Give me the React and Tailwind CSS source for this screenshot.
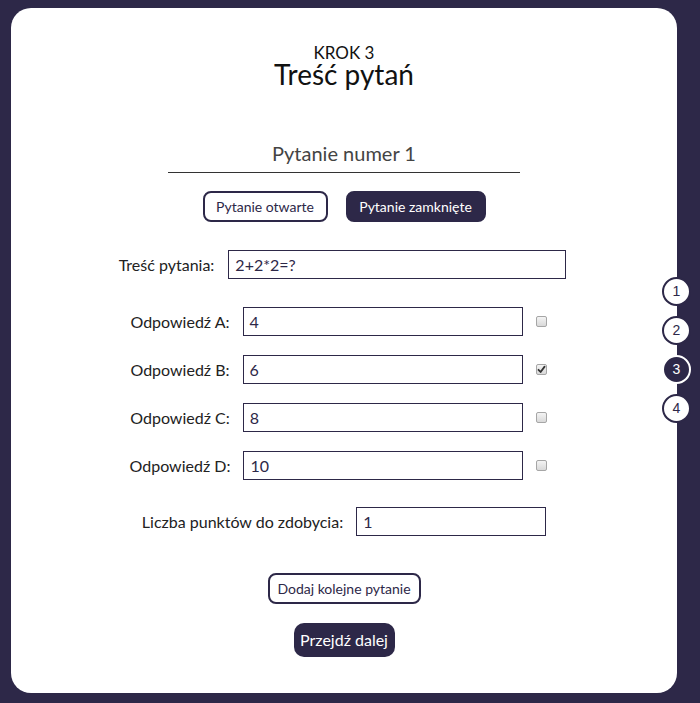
import React from "react";

function Check({ checked }) {
  return (
    <span className="relative flex w-[11px] h-[11px] shrink-0 items-center justify-center rounded-[2px] border border-[#a6a6a6] bg-gradient-to-b from-[#f4f4f4] to-[#d9d9d9]">
      {checked && (
        <svg width="9" height="9" viewBox="0 0 9 9" className="absolute">
          <path d="M1.5 4.8 L3.6 7 L7.6 1.6" fill="none" stroke="#333" strokeWidth="1.8" strokeLinecap="round" strokeLinejoin="round" />
        </svg>
      )}
    </span>
  );
}

function AnswerRow({ letter, value, checked }) {
  return (
    <div className="flex items-center pr-[11px]">
      <span className="text-[16px] leading-[20px] text-[#222]">Odpowiedź {letter}:</span>
      <div className="ml-[13px] flex h-[29px] w-[280px] items-center border border-[#2d2848] pl-[6px] text-[16px] text-[#2d2848]">
        {value}
      </div>
      <div className="ml-[13px]">
        <Check checked={checked} />
      </div>
    </div>
  );
}

export default function App() {
  return (
    <div className="min-h-[703px] w-full bg-[#2d2848] pt-[8px] pl-[11px] font-['Lato','Noto_Sans',sans-serif]">
      <div className="relative flex h-[685px] w-[666px] flex-col items-center rounded-[20px] bg-white pt-[36px]">
        <div className="text-[17px] leading-[17px] text-[#111]">KROK 3</div>
        <div className="text-[28px] leading-[26px] text-[#111]">Treść pytań</div>

        <div className="mt-[54px] w-[352px] border-b border-[#333] pb-[7px] text-center text-[20px] leading-[24px] text-[#444]">
          Pytanie numer 1
        </div>

        <div className="mt-[18px] flex gap-[18px]">
          <button className="flex h-[31px] w-[125px] items-center justify-center rounded-[8px] border-2 border-[#2d2848] bg-white text-[14px] text-[#2d2848]">
            Pytanie otwarte
          </button>
          <button className="flex h-[31px] w-[140px] items-center justify-center rounded-[8px] border-2 border-[#2d2848] bg-[#2d2848] text-[14px] text-white">
            Pytanie zamknięte
          </button>
        </div>

        <div className="mt-[28px] flex items-center pr-[3px]">
          <span className="text-[16px] leading-[20px] text-[#222]">Treść pytania:</span>
          <div className="ml-[14px] flex h-[29px] w-[338px] items-center border border-[#2d2848] pl-[6px] text-[16px] text-[#2d2848]">
            2+2*2=?
          </div>
        </div>

        <div className="mt-[28px] flex flex-col items-center gap-[19px]">
          <AnswerRow letter="A" value="4" />
          <AnswerRow letter="B" value="6" checked />
          <AnswerRow letter="C" value="8" />
          <AnswerRow letter="D" value="10" />
        </div>

        <div className="mt-[27px] flex items-center">
          <span className="text-[16px] leading-[20px] text-[#222]">Liczba punktów do zdobycia:</span>
          <div className="ml-[13px] flex h-[29px] w-[190px] items-center border border-[#2d2848] pl-[6px] text-[16px] text-[#2d2848]">
            1
          </div>
        </div>

        <button className="mt-[37px] flex h-[31px] w-[153px] items-center justify-center rounded-[8px] border-2 border-[#2d2848] bg-white text-[14px] text-[#2d2848]">
          Dodaj kolejne pytanie
        </button>

        <button className="mt-[19px] flex h-[34px] w-[101px] items-center justify-center rounded-[10px] bg-[#2d2848] text-[16px] text-white">
          Przejdź dalej
        </button>

        <div className="absolute left-[651px] top-[269px] flex flex-col gap-[10px] font-['Liberation_Sans',sans-serif]">
          {[1, 2, 3, 4].map((n) => (
            <div
              key={n}
              className={
                n === 3
                  ? "flex h-[29px] w-[29px] items-center justify-center rounded-full border-2 border-white bg-[#2d2848] text-[14px] text-white"
                  : "flex h-[29px] w-[29px] items-center justify-center rounded-full border-2 border-[#2d2848] bg-white text-[14px] text-[#2d2848]"
              }
            >
              {n}
            </div>
          ))}
        </div>
      </div>
    </div>
  );
}
